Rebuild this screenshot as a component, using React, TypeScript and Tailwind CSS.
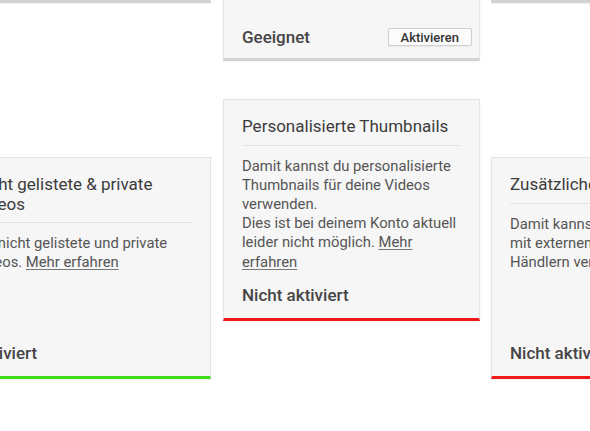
type CardProps = {
  title: string;
  bar: string;
  status: string;
  children: React.ReactNode;
};

function FeatureCard({ title, bar, status, children }: CardProps) {
  return (
    <article
      className={[
        "flex h-[222px] flex-col border border-[#e4e4e4] border-b-[3px] bg-[#f6f6f6] pl-[18px] pr-[18px] pt-[17px] pb-[13px] shadow-[0_1px_2px_rgba(0,0,0,0.06)]",
        bar,
      ].join(" ")}
    >
      <h3 className="border-b border-[#e3e3e3] pb-[8px] text-[17px] leading-[19.5px] font-normal text-[#3c3c3c]">
        {title}
      </h3>
      <div className="mt-[11px] text-[14.8px] leading-[19.2px] text-[#555]">
        {children}
      </div>
      <p className="mt-auto text-[17px] leading-[20px] font-medium text-[#454545]">
        {status}
      </p>
    </article>
  );
}

function StubCard({ children }: { children?: React.ReactNode }) {
  return (
    <div className="flex h-[100px] flex-col justify-end border border-[#e4e4e4] border-b-[3px] border-b-[#d2d2d2] bg-[#f6f6f6] shadow-[0_1px_2px_rgba(0,0,0,0.06)]">
      {children}
    </div>
  );
}

function More() {
  return <span className="underline decoration-[#777] underline-offset-2">Mehr erfahren</span>;
}

export default function App() {
  return (
    <div className="relative h-[431px] w-[590px] overflow-hidden bg-white font-['Roboto','Liberation_Sans',sans-serif]">
      <div className="ml-[-46px] flex items-start">
        {/* Left column */}
        <div className="flex w-[257px] shrink-0 flex-col">
          <div className="mt-[-97px]">
            <StubCard />
          </div>
          <div className="mt-[154px]">
            <FeatureCard title="Nicht gelistete & private Videos" bar="border-b-[#3ddc14]" status="Aktiviert">
              <p>
                Für nicht gelistete und private Videos. <More />
              </p>
            </FeatureCard>
          </div>
        </div>

        {/* Center column */}
        <div className="ml-[12px] flex w-[257px] shrink-0 flex-col">
          <div className="mt-[-39px]">
            <StubCard>
              <div className="flex items-center justify-between pb-[11px] pl-[18px] pr-[7px]">
                <span className="text-[17px] leading-[20px] font-medium text-[#454545]">Geeignet</span>
                <button className="h-[18px] rounded-[2px] border border-[#cfcfcf] bg-[#fbfbfb] px-[12px] text-[13px] leading-[15px] font-medium text-[#333] shadow-[0_1px_1px_rgba(0,0,0,0.05)]">
                  Aktivieren
                </button>
              </div>
            </StubCard>
          </div>
          <div className="mt-[38px]">
            <FeatureCard title="Personalisierte Thumbnails" bar="border-b-[#ee1a1a]" status="Nicht aktiviert">
              <p>Damit kannst du personalisierte Thumbnails für deine Videos verwenden.</p>
              <p>
                Dies ist bei deinem Konto aktuell leider nicht möglich. <More />
              </p>
            </FeatureCard>
          </div>
        </div>

        {/* Right column */}
        <div className="ml-[11px] flex w-[257px] shrink-0 flex-col">
          <div className="mt-[-97px]">
            <StubCard />
          </div>
          <div className="mt-[154px]">
            <FeatureCard title="Zusätzliche Links" bar="border-b-[#ee1a1a]" status="Nicht aktiviert">
              <p>
                Damit kannst du Videos
                <br />
                mit externen Websites und
                <br />
                Händlern verknüpfen.
              </p>
            </FeatureCard>
          </div>
        </div>
      </div>
    </div>
  );
}
